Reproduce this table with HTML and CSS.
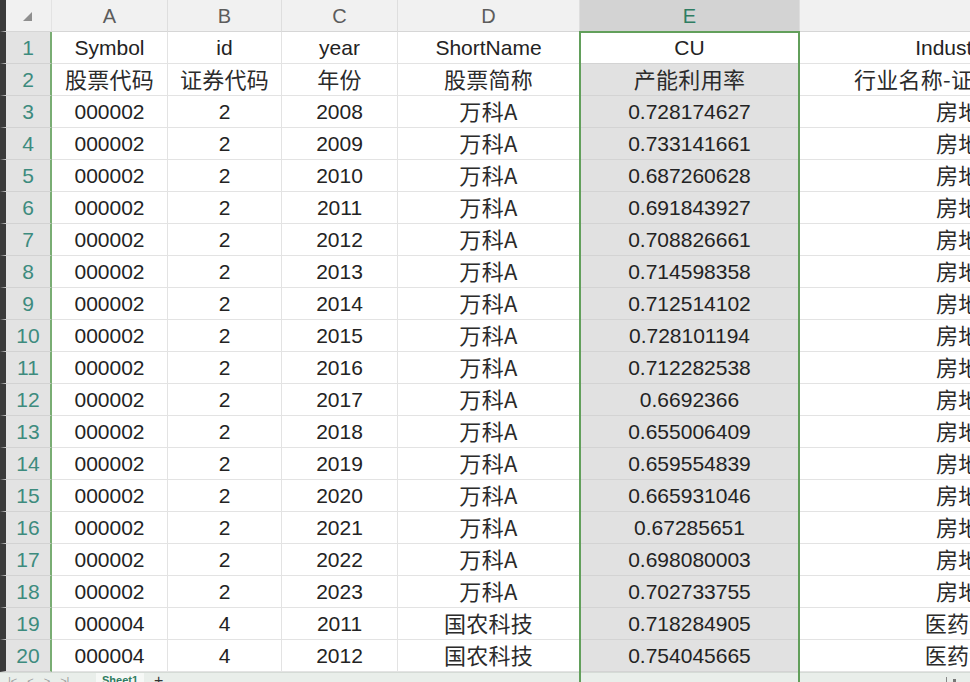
FILE: index.html
```html
<!DOCTYPE html>
<html>
<head>
<meta charset="utf-8">
<link rel="stylesheet" href="styles.css">
</head>
<body>
<div class="sheet">
  <div class="c corner"><span class="tri"></span></div>
  <div class="c ch">A</div><div class="c ch">B</div><div class="c ch">C</div><div class="c ch">D</div><div class="c ch sel">E</div><div class="c ch">F</div>

  <div class="c rh">1</div><div class="c">Symbol</div><div class="c">id</div><div class="c">year</div><div class="c">ShortName</div><div class="c e active">CU</div><div class="c">IndustryName</div>
  <div class="c rh">2</div><div class="c cjk">股票代码</div><div class="c cjk">证券代码</div><div class="c cjk">年份</div><div class="c cjk">股票简称</div><div class="c e cjk">产能利用率</div><div class="c cjk">行业名称-证监会行业名称</div>
  <div class="c rh">3</div><div class="c">000002</div><div class="c">2</div><div class="c">2008</div><div class="c cjk">万科A</div><div class="c e">0.728174627</div><div class="c cjk">房地产业</div>
  <div class="c rh">4</div><div class="c">000002</div><div class="c">2</div><div class="c">2009</div><div class="c cjk">万科A</div><div class="c e">0.733141661</div><div class="c cjk">房地产业</div>
  <div class="c rh">5</div><div class="c">000002</div><div class="c">2</div><div class="c">2010</div><div class="c cjk">万科A</div><div class="c e">0.687260628</div><div class="c cjk">房地产业</div>
  <div class="c rh">6</div><div class="c">000002</div><div class="c">2</div><div class="c">2011</div><div class="c cjk">万科A</div><div class="c e">0.691843927</div><div class="c cjk">房地产业</div>
  <div class="c rh">7</div><div class="c">000002</div><div class="c">2</div><div class="c">2012</div><div class="c cjk">万科A</div><div class="c e">0.708826661</div><div class="c cjk">房地产业</div>
  <div class="c rh">8</div><div class="c">000002</div><div class="c">2</div><div class="c">2013</div><div class="c cjk">万科A</div><div class="c e">0.714598358</div><div class="c cjk">房地产业</div>
  <div class="c rh">9</div><div class="c">000002</div><div class="c">2</div><div class="c">2014</div><div class="c cjk">万科A</div><div class="c e">0.712514102</div><div class="c cjk">房地产业</div>
  <div class="c rh">10</div><div class="c">000002</div><div class="c">2</div><div class="c">2015</div><div class="c cjk">万科A</div><div class="c e">0.728101194</div><div class="c cjk">房地产业</div>
  <div class="c rh">11</div><div class="c">000002</div><div class="c">2</div><div class="c">2016</div><div class="c cjk">万科A</div><div class="c e">0.712282538</div><div class="c cjk">房地产业</div>
  <div class="c rh">12</div><div class="c">000002</div><div class="c">2</div><div class="c">2017</div><div class="c cjk">万科A</div><div class="c e">0.6692366</div><div class="c cjk">房地产业</div>
  <div class="c rh">13</div><div class="c">000002</div><div class="c">2</div><div class="c">2018</div><div class="c cjk">万科A</div><div class="c e">0.655006409</div><div class="c cjk">房地产业</div>
  <div class="c rh">14</div><div class="c">000002</div><div class="c">2</div><div class="c">2019</div><div class="c cjk">万科A</div><div class="c e">0.659554839</div><div class="c cjk">房地产业</div>
  <div class="c rh">15</div><div class="c">000002</div><div class="c">2</div><div class="c">2020</div><div class="c cjk">万科A</div><div class="c e">0.665931046</div><div class="c cjk">房地产业</div>
  <div class="c rh">16</div><div class="c">000002</div><div class="c">2</div><div class="c">2021</div><div class="c cjk">万科A</div><div class="c e">0.67285651</div><div class="c cjk">房地产业</div>
  <div class="c rh">17</div><div class="c">000002</div><div class="c">2</div><div class="c">2022</div><div class="c cjk">万科A</div><div class="c e">0.698080003</div><div class="c cjk">房地产业</div>
  <div class="c rh">18</div><div class="c">000002</div><div class="c">2</div><div class="c">2023</div><div class="c cjk">万科A</div><div class="c e">0.702733755</div><div class="c cjk">房地产业</div>
  <div class="c rh">19</div><div class="c">000004</div><div class="c">4</div><div class="c">2011</div><div class="c cjk">国农科技</div><div class="c e">0.718284905</div><div class="c cjk">医药制造业</div>
  <div class="c rh">20</div><div class="c">000004</div><div class="c">4</div><div class="c">2012</div><div class="c cjk">国农科技</div><div class="c e">0.754045665</div><div class="c cjk">医药制造业</div>

  <div class="selbox"></div>
</div>
<div class="tabs">
  <div class="nav"><span>|&lt;</span><span>&lt;</span><span>&gt;</span><span>&gt;|</span></div>
  <div class="tab">Sheet1</div>
  <div class="plus">+</div>
  <div class="spacer"></div>
  <div class="right"><span class="bar"></span><span class="dot"></span></div>
</div>
</body>
</html>
```

FILE: styles.css
```css
html, body {
  margin: 0;
  padding: 0;
}
body {
  width: 970px;
  height: 682px;
  overflow: hidden;
  background: #ffffff;
  font-family: "Liberation Sans", "Noto Sans CJK SC", sans-serif;
}
.sheet {
  position: relative;
  display: grid;
  grid-template-columns: 52px 116px 114px 116px 182px 220px 362px;
  grid-template-rows: 32px repeat(20, 32px);
  width: 1162px;
}
.c {
  box-sizing: border-box;
  display: flex;
  align-items: center;
  justify-content: center;
  border-right: 1px solid #e3e3e3;
  border-bottom: 1px solid #e3e3e3;
  font-size: 21px;
  color: #232323;
  white-space: nowrap;
  padding-top: 1px;
}
.cjk {
  font-family: "Noto Sans CJK SC", "Liberation Sans", sans-serif;
  font-size: 22px;
  color: #2b2b2b;
  padding-top: 0;
  padding-bottom: 3px;
  letter-spacing: 0.3px;
}
.corner {
  position: relative;
  background: #f1f1f1;
  border-left: 6px solid #3a3a3a;
  border-bottom: 1px solid #d6d6d6;
}
.tri {
  width: 0;
  height: 0;
  border-left: 9px solid transparent;
  border-bottom: 9px solid #8f8f8f;
  margin-left: -2px;
}
.ch {
  background: #f1f1f1;
  color: #5c5c5c;
  font-size: 20px;
  border-right: 1px solid #dedede;
  border-bottom: 1px solid #d6d6d6;
}
.ch.sel {
  background: #d3d3d3;
  color: #2f7d62;
}
.rh {
  background: #e3e3e3;
  color: #3d8b7e;
  font-size: 21px;
  border-left: 6px solid #3a3a3a;
  border-right: 2px solid #79ad73;
  border-bottom: 1px solid #d2d2d2;
}
.e {
  background: #e1e1e1;
  border-bottom: 1px solid #d3d3d3;
}
.e.active {
  background: #ffffff;
}
.selbox {
  position: absolute;
  left: 579px;
  top: 31px;
  width: 221px;
  height: 660px;
  box-sizing: border-box;
  border: 2px solid #629f5b;
  pointer-events: none;
}
.tabs {
  display: flex;
  align-items: center;
  height: 24px;
  background: #e9eeea;
  border-top: 1px solid #d5dbd6;
  font-family: "Liberation Sans", sans-serif;
  font-size: 11px;
  color: #9a9a9a;
}
.nav {
  display: flex;
  gap: 10px;
  padding-left: 8px;
  width: 84px;
  box-sizing: border-box;
  margin-top: -8px;
}
.tab {
  background: #f6f8f6;
  color: #2f7d62;
  font-weight: bold;
  font-size: 11px;
  padding: 0 6px 10px;
  width: 48px;
  box-sizing: border-box;
  text-align: center;
  margin-left: 12px;
  height: 24px;
  line-height: 14px;
}
.plus {
  color: #333;
  font-size: 16px;
  margin-left: 10px;
  margin-top: -8px;
}
.spacer {
  flex: 1;
}
.right {
  display: flex;
  align-items: center;
  gap: 6px;
  margin-right: 14px;
  margin-top: -10px;
}
.bar {
  width: 1px;
  height: 6px;
  background: #888;
}
.dot {
  width: 3px;
  height: 3px;
  background: #777;
}
```
